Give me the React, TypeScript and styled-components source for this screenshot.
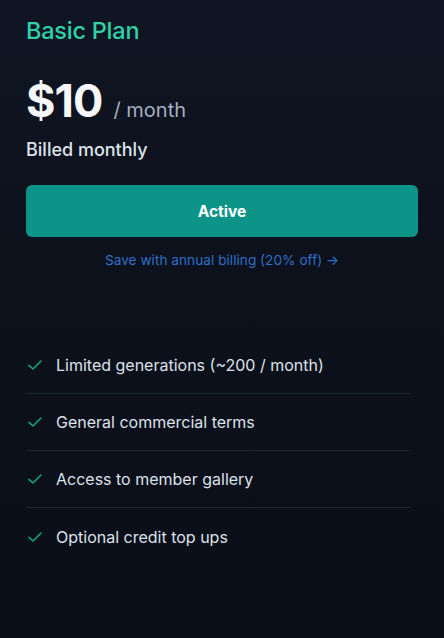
import React from 'react';
import styled, {createGlobalStyle} from 'styled-components';

const GlobalStyle = createGlobalStyle`
  * { box-sizing: border-box; }
  html, body {
    margin: 0;
    padding: 0;
    background: #0b0f1a;
  }
  body {
    font-family: Inter, "Noto Sans", sans-serif;
    -webkit-font-smoothing: antialiased;
  }
`

const Card = styled.div`
  width: 444px;
  height: 638px;
  padding: 17px 26px 0;
  background: linear-gradient(180deg, #0f1522 0%, #0c111c 45%, #0a0e19 100%);
  display: flex;
  flex-direction: column;
`
const PlanTitle = styled.h2`
  margin: 0;
  font-size: 23.5px;
  font-weight: 500;
  color: #2fd1aa;
  letter-spacing: -0.01em;
  line-height: 28px;
`
const PriceRow = styled.div`
  display: flex;
  align-items: baseline;
  gap: 11px;
  margin-top: 29px;
`
const Price = styled.span`
  font-size: 45px;
  font-weight: 700;
  color: #f5f7fb;
  letter-spacing: -0.02em;
  line-height: 54px;
`
const Period = styled.span`
  font-size: 20px;
  font-weight: 400;
  color: #a7afbf;
`
const Billing = styled.div`
  margin-top: 10px;
  font-size: 18px;
  font-weight: 500;
  color: #dfe3ea;
  line-height: 24px;
`
const ActiveButton = styled.button`
  margin-top: 23px;
  width: 100%;
  height: 52px;
  border: none;
  border-radius: 6px;
  background: #0d9488;
  color: #ffffff;
  font-family: inherit;
  font-size: 15.5px;
  font-weight: 700;
  cursor: pointer;
`
const AnnualLink = styled.a`
  display: block;
  margin-top: 14px;
  text-align: center;
  font-size: 13.7px;
  color: #2f6fc9;
  text-decoration: none;
  line-height: 18px;
`
const FeatureList = styled.ul`
  list-style: none;
  margin: 68px 8px 0 0;
  padding: 0;
`
const FeatureItem = styled.li`
  display: flex;
  align-items: center;
  gap: 13px;
  height: 57px;
  padding-left: 1px;
  border-bottom: 1px solid #1f2837;
  font-size: 16px;
  color: #dde2ea;

  &:last-child {
    border-bottom: none;
  }
`
const Check = () => (
  <svg width="16" height="16" viewBox="0 0 24 24" fill="none" stroke="#10a57a"
       strokeWidth="2.4" strokeLinecap="round" strokeLinejoin="round">
    <path d="M3 12.5l6 5.5L21 6"/>
  </svg>
)

const features = [
  'Limited generations (~200 / month)',
  'General commercial terms',
  'Access to member gallery',
  'Optional credit top ups',
]

const App = () => {
  return (
    <>
      <GlobalStyle/>
      <Card>
        <PlanTitle>Basic Plan</PlanTitle>
        <PriceRow>
          <Price>$10</Price>
          <Period>/ month</Period>
        </PriceRow>
        <Billing>Billed monthly</Billing>
        <ActiveButton>Active</ActiveButton>
        <AnnualLink href="#">Save with annual billing (20% off) →</AnnualLink>
        <FeatureList>
          {features.map((f) => (
            <FeatureItem key={f}>
              <Check/>
              {f}
            </FeatureItem>
          ))}
        </FeatureList>
      </Card>
    </>
  );
};

export default App;
